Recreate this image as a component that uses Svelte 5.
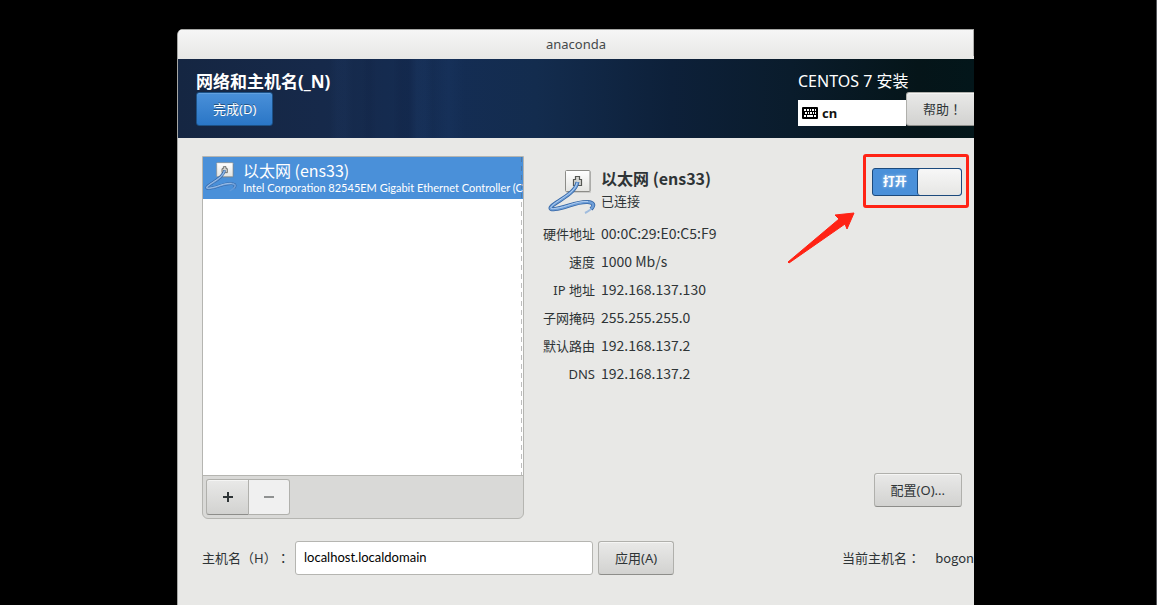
<script>
    let device = {
        name: "以太网 (ens33)",
        detail: "Intel Corporation 82545EM Gigabit Ethernet Controller (Copper)",
        status: "已连接",
    };

    let info = [
        ["硬件地址", "00:0C:29:E0:C5:F9"],
        ["速度", "1000 Mb/s"],
        ["IP 地址", "192.168.137.130"],
        ["子网掩码", "255.255.255.0"],
        ["默认路由", "192.168.137.2"],
        ["DNS", "192.168.137.2"],
    ];

    let hostname = "localhost.localdomain";
    let currentHost = "bogon";
    let enabled = true;
</script>

{#snippet wiredIcon(size)}
    <svg class="wired" width={size} height={size} viewBox="0 0 48 48" aria-hidden="true">
        <defs>
            <linearGradient id="plate" x1="0" y1="0" x2="0" y2="1">
                <stop offset="0" stop-color="#ffffff" />
                <stop offset="1" stop-color="#e4e4e1" />
            </linearGradient>
        </defs>
        <rect x="18" y="3.5" width="25" height="21.5" rx="1" fill="#777" opacity="0.25" />
        <rect x="17.5" y="2.5" width="24.5" height="21" rx="1" fill="url(#plate)" stroke="#8c8c88" />
        <path d="M25.500 17.500V11.500H27.500V8.500H31.500V11.500H33.500V17.500Z" fill="#d5d5d1" stroke="#555753" stroke-width="1.200" />
        <path d="M29.500 14C28 22 20 27 11 33C1 39 0 42 7 41C18 40 29 33 40 34C47 35 46 38 43 41" fill="none" stroke="#3465a4" stroke-width="4" />
        <path d="M45 38C44 41 41 43 37 45" fill="none" stroke="#6f9fd8" stroke-width="2" opacity="0.6" />
        <path d="M29.500 14C28 22 20 27 11 33C1 39 0 42 7 41C18 40 29 33 40 34C47 35 46 38 43 41" fill="none" stroke="#6f9fd8" stroke-width="2.400" />
        <path d="M29 15C27.500 22 20 26.500 11 32.500C2 38.500 0 41.500 7 40.500C18 39.500 29 32.500 40 33.500" fill="none" stroke="#b9d3f2" stroke-width="0.900" />
    </svg>
{/snippet}

<div class="screen">
    <div class="window">
        <div class="titlebar">anaconda</div>

        <header>
            <div class="spoke">
                <h1>网络和主机名(_N)</h1>
                <button class="done">完成(D)</button>
            </div>
            <div class="product">
                <div class="product_name">CENTOS 7 安装</div>
                <div class="product_row">
                    <div class="layout">
                        <svg width="16" height="12" viewBox="0 0 16 12" aria-hidden="true">
                            <rect width="16" height="12" rx="1" fill="#000" />
                            <g fill="#fff">
                                <path d="M2 2h2v2H2zM5 2h2v2H5zM8 2h1v2H8zM10 2h2v2h-2zM13 2h1v2h-1z" />
                                <path d="M3 5h2v2H3zM6 5h1v2H6zM8 5h2v2H8zM11 5h1v2h-1zM13 5h1v2h-1z" />
                                <path d="M2 8h2v2H2zM5 8h6v2H5zM12 8h2v2h-2z" />
                            </g>
                        </svg>
                        cn
                    </div>
                    <button class="help">帮助<span class="punct">！</span></button>
                </div>
            </div>
        </header>

        <main>
            <div class="columns">
                <section class="devices">
                    <div class="list">
                        <div class="device">
                            {@render wiredIcon(32)}
                            <div class="device_text">
                                <div class="device_name">{device.name}</div>
                                <div class="device_detail">{device.detail}</div>
                            </div>
                        </div>
                    </div>
                    <div class="toolbar">
                        <button class="add" aria-label="添加">
                            <svg width="12" height="12" viewBox="0 0 12 12"><path d="M1 6h10M6 1v10" stroke="#2e3436" stroke-width="2" /></svg>
                        </button>
                        <button class="remove" aria-label="移除" disabled>
                            <svg width="12" height="12" viewBox="0 0 12 12"><path d="M1 6h10" stroke="#8f9191" stroke-width="2" /></svg>
                        </button>
                    </div>
                </section>

                <section class="details">
                    <div class="details_top">
                        {@render wiredIcon(48)}
                        <div class="summary">
                            <h2>{device.name}</h2>
                            <div class="status">{device.status}</div>
                        </div>
                        <div class="switch_area">
                            <label class="switch">
                                <input type="checkbox" bind:checked={enabled} />
                                <span class="switch_text">打开</span>
                                <span class="switch_knob"></span>
                            </label>
                            <div class="mark"></div>
                            <svg class="arrow" width="68" height="52" viewBox="0 0 68 52" aria-hidden="true">
                                <path d="M1 50L52 7L48 3L67 1L60 17L58 12L2 51Z" fill="#ff2315" stroke="#ff2315" stroke-linejoin="round" />
                            </svg>
                        </div>
                    </div>

                    <dl>
                        {#each info as [label, value]}
                            <dt>{label}</dt>
                            <dd>{value}</dd>
                        {/each}
                    </dl>

                    <button class="configure">配置(O)...</button>
                </section>
            </div>

            <div class="host">
                <label for="hostname">主机名（H）<span class="punct">：</span></label>
                <input id="hostname" type="text" bind:value={hostname} />
                <button class="apply">应用(A)</button>
                <div class="current">
                    <span>当前主机名<span class="punct">：</span></span>
                    <span class="current_name">{currentHost}</span>
                </div>
            </div>
        </main>
    </div>
</div>

<style>
    :global(body) {
        margin: 0;
        background: #000;
    }

    .screen {
        box-sizing: border-box;
        min-height: 100vh;
        display: flex;
        padding: 29px 182px 0 177px;
        border-right: 1px solid #55575b;
        font-family: "Noto Sans", "Noto Sans CJK SC", sans-serif;
        font-size: 13px;
        color: #2e3436;
        text-spacing-trim: space-all;
        overflow: hidden;
    }

    .window {
        flex: 1;
        min-width: 0;
        overflow: hidden;
        border-left: 1px solid #a5a6a4;
        border-radius: 6px 0 0 0;
        background: #e8e8e6;
    }

    /* full-width punctuation sits in the middle of its cell */
    .punct {
        font-family: "Noto Sans CJK TC", sans-serif;
        line-height: 1;
    }

    .titlebar {
        box-sizing: border-box;
        height: 30px;
        line-height: 29px;
        text-align: center;
        border-top: 1px solid #a5a6a4;
        background:
            linear-gradient(#b0b0ae, #b0b0ae) right top / 1px 26px no-repeat,
            linear-gradient(#f6f6f6, #e7e7e5);
        color: #45494a;
    }

    header {
        box-sizing: border-box;
        height: 79px;
        display: flex;
        justify-content: space-between;
        padding: 12px 0 0 18px;
        color: #fff;
        background:
            linear-gradient(90deg, transparent 19%, rgba(60, 110, 180, 0.05) 20% 21%, transparent 22% 23%, rgba(0, 0, 30, 0.06) 24%, transparent 25% 27%, rgba(0, 0, 30, 0.08) 28% 29%, rgba(60, 110, 180, 0.06) 30% 31%, transparent 32%, rgba(60, 110, 180, 0.05) 34%, transparent 36%),
            linear-gradient(90deg, #152642 0%, #16294a 18%, #142d54 34%, #132c4e 45%, #0d2039 62%, #0a1c2c 77%, #051519 93%, #03161a 100%);
    }

    h1 {
        margin: 0;
        font-size: 17px;
        line-height: 21px;
        font-weight: 700;
    }

    button {
        box-sizing: border-box;
        height: 34px;
        padding: 0 16px 2px;
        border: 1px solid #b0b0ac;
        border-bottom-color: #8d8d8a;
        border-radius: 3px;
        background: linear-gradient(#e9e9e8, #d2d2d0);
        box-shadow: inset 0 1px #f5f5f4;
        font: inherit;
        color: #2e3436;
        white-space: nowrap;
    }

    .done {
        border-color: #1c5187;
        background: linear-gradient(#4a90d9, #2a76c6);
        box-shadow: inset 0 1px #62a0df;
        color: #fff;
        text-shadow: 0 -1px rgba(0, 0, 0, 0.4);
    }

    .product {
        width: 176px;
    }

    .product_name {
        font-size: 16px;
        line-height: 21px;
        white-space: nowrap;
    }

    .product_row {
        display: flex;
        align-items: flex-end;
    }

    .layout {
        flex: 0 0 108px;
        box-sizing: border-box;
        height: 26px;
        display: flex;
        align-items: center;
        gap: 4px;
        padding-left: 4px;
        background: #fff;
        color: #111;
        font-weight: 700;
    }

    .help {
        flex: none;
    }

    main {
        padding: 18px 0 0 24px;
    }

    .columns {
        display: flex;
        gap: 18px;
        margin-right: 12px;
    }

    .devices {
        flex: 0 0 322px;
        box-sizing: border-box;
        height: 363px;
        display: flex;
        flex-direction: column;
        border: 1px solid #b5b5b1;
        border-radius: 0 0 6px 6px;
        background: #d9d9d7;
        overflow: hidden;
    }

    .list {
        position: relative;
        flex: 1;
        border-bottom: 1px solid #b5b5b1;
        background: #fff;
    }

    /* edge of the scrolled column */
    .list::after {
        content: "";
        position: absolute;
        top: 0;
        right: 1px;
        width: 1px;
        height: 100%;
        background: repeating-linear-gradient(rgba(90, 90, 90, 0.4) 0 5px, transparent 5px 9px);
    }

    .device {
        box-sizing: border-box;
        height: 42px;
        display: flex;
        align-items: center;
        gap: 6px;
        padding: 0 0 2px 2px;
        background: #4a90d9;
        color: #fff;
        overflow: hidden;
        white-space: nowrap;
    }

    .wired {
        flex: none;
    }

    .device_name {
        font-family: "Noto Sans CJK SC", sans-serif;
        font-size: 16px;
        line-height: 22px;
    }

    .device_detail {
        font-family: Lato, sans-serif;
        font-size: 11px;
        line-height: 14px;
    }

    .toolbar {
        display: flex;
        padding: 3px;
    }

    .toolbar button {
        width: 43px;
        height: 36px;
        padding: 0;
        display: flex;
        align-items: center;
        justify-content: center;
    }

    .toolbar .add {
        border-radius: 3px 0 0 3px;
    }

    .toolbar .remove {
        width: 41px;
        border-left: 0;
        border-bottom-color: #b0b0ac;
        border-radius: 0 3px 3px 0;
        background: #f0f0f0;
        box-shadow: none;
    }

    .details {
        flex: 1;
        min-width: 0;
        display: flex;
        flex-direction: column;
        padding-bottom: 12px;
    }

    .details_top {
        display: flex;
        height: 64px;
        padding-left: 6px;
    }

    .details_top .wired {
        margin-top: 12px;
    }

    .summary {
        flex: 1;
        margin: 11px 0 0 5px;
    }

    h2 {
        margin: 0;
        font-family: "Noto Sans CJK SC", sans-serif;
        font-size: 16px;
        line-height: 22px;
        font-weight: 700;
    }

    .status {
        line-height: 24px;
    }

    .switch_area {
        position: relative;
        padding-top: 12px;
    }

    .switch {
        box-sizing: border-box;
        width: 90px;
        height: 28px;
        display: flex;
        border: 1px solid #1c4a7c;
        border-radius: 3px;
        background: #4a90d9;
        overflow: hidden;
    }

    .switch input {
        position: absolute;
        opacity: 0;
    }

    .switch_text {
        flex: 1;
        line-height: 26px;
        text-align: center;
        color: #fff;
        font-size: 12px;
        font-weight: 700;
        text-shadow: 0 0 3px rgba(255, 255, 255, 0.6);
    }

    .switch_knob {
        flex: 1;
        border-left: 1px solid #1c4a7c;
        border-radius: 3px;
        background: linear-gradient(#f7f7f7, #e6e6e4);
    }

    .mark {
        position: absolute;
        top: -2px;
        left: -9px;
        right: -7px;
        height: 48px;
        border: 3px solid #ff2315;
        border-radius: 3px;
        pointer-events: none;
    }

    .arrow {
        position: absolute;
        top: 56px;
        right: 107px;
    }

    dl {
        display: grid;
        grid-template-columns: 53px 1fr;
        grid-auto-rows: 28px;
        column-gap: 6px;
        line-height: 28px;
        margin: 0;
    }

    dt {
        text-align: right;
        white-space: nowrap;
    }

    dd {
        margin: 0;
        font-family: "Noto Sans CJK SC", sans-serif;
        font-size: 14px;
        line-height: 26px;
    }

    .configure {
        align-self: flex-end;
        margin-top: auto;
    }

    .host {
        display: flex;
        align-items: center;
        margin-top: 22px;
        white-space: nowrap;
    }

    .host label {
        flex: 0 0 93px;
        padding-bottom: 2px;
    }

    .host input {
        box-sizing: border-box;
        width: 298px;
        height: 34px;
        padding: 0 8px 2px;
        border: 1px solid #b5b5b1;
        border-radius: 3px;
        background: #fff;
        font: inherit;
        font-family: Lato, sans-serif;
        color: #000;
    }

    .apply {
        margin-left: 5px;
    }

    .current {
        display: flex;
        gap: 15px;
        margin-left: auto;
        padding-bottom: 2px;
    }

    .current_name {
        font-family: "Noto Sans CJK SC", sans-serif;
    }
</style>
